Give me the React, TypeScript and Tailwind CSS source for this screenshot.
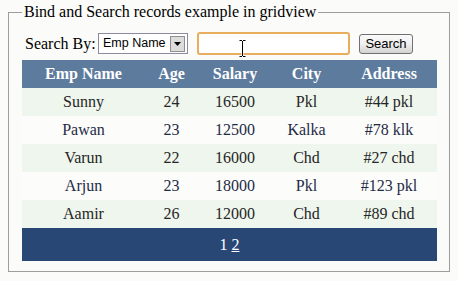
import React from 'react';

interface Emp {
  name: string;
  age: number;
  salary: number;
  city: string;
  address: string;
}

const rows: Emp[] = [
  { name: 'Sunny', age: 24, salary: 16500, city: 'Pkl', address: '#44 pkl' },
  { name: 'Pawan', age: 23, salary: 12500, city: 'Kalka', address: '#78 klk' },
  { name: 'Varun', age: 22, salary: 16000, city: 'Chd', address: '#27 chd' },
  { name: 'Arjun', age: 23, salary: 18000, city: 'Pkl', address: '#123 pkl' },
  { name: 'Aamir', age: 26, salary: 12000, city: 'Chd', address: '#89 chd' },
];

const serif = "font-['Liberation_Serif','Times_New_Roman',serif]";
const sans = "font-['Liberation_Sans',Arial,sans-serif]";

export default function App() {
  return (
    <div className={`min-h-[281px] w-[458px] bg-[#fbfbf9] ${serif} text-[16px] text-black`}>
      <fieldset className="ml-[8px] w-[442px] border border-[#9d9d9d] pl-[13px] pr-[12px] pt-[7px] pb-[10px]">
        <legend className="px-[2px] leading-[24px]">Bind and Search records example in gridview</legend>

        <div className="flex h-[25px] items-center">
          <span className="w-[76px] pl-[3px]">Search By:</span>

          <div className={`flex h-[21px] w-[90px] items-center justify-between border border-[#8a8aa0] bg-white pl-[4px] pr-[2px] ${sans} text-[12.5px]`}>
            <span>Emp Name</span>
            <div className="flex h-[16px] w-[15px] items-center justify-center border border-[#8f8f8f] bg-[#dcdcdc]">
              <svg width="7" height="4" viewBox="0 0 7 4">
                <path d="M0 0h7L3.5 4z" fill="#000" />
              </svg>
            </div>
          </div>

          <div className="relative ml-[9px] h-[23px] w-[153px] rounded-[3px] border-2 border-[#e9ad5e] bg-white">
            <svg className="absolute left-[40px] top-[6px]" width="7" height="17" viewBox="0 0 7 17">
              <path d="M0.5 0.5h2.5M4 0.5h2.5M3.5 1v15M0.5 16.5h2.5M4 16.5h2.5" stroke="#fff" strokeWidth="2.2" fill="none" />
              <path d="M0.5 0.5h2.5M4 0.5h2.5M3.5 1v15M0.5 16.5h2.5M4 16.5h2.5" stroke="#000" strokeWidth="1" fill="none" />
            </svg>
          </div>

          <button className={`ml-[9px] h-[20px] w-[54px] rounded-[3px] border border-[#707070] bg-linear-to-b from-[#fafafa] via-[#efefef] to-[#d3d3d3] ${sans} text-[13px] leading-[16px]`}>
            Search
          </button>
        </div>

        <table className="mt-[4px] w-[415px] table-fixed border-collapse text-center">
          <colgroup>
            <col className="w-[123px]" />
            <col className="w-[53px]" />
            <col className="w-[74px]" />
            <col className="w-[69px]" />
            <col className="w-[96px]" />
          </colgroup>
          <thead>
            <tr className="h-[28px] bg-[#5d7b9d] font-bold text-white">
              <th>Emp Name</th>
              <th>Age</th>
              <th>Salary</th>
              <th>City</th>
              <th>Address</th>
            </tr>
          </thead>
          <tbody>
            {rows.map((r, i) => (
              <tr
                key={r.name}
                className={`h-[28px] ${i % 2 === 0 ? 'bg-[#eff6ed] text-[#262626]' : 'bg-[#fcfcfb] text-[#1e2b45]'}`}
              >
                <td>{r.name}</td>
                <td>{r.age}</td>
                <td>{r.salary}</td>
                <td>{r.city}</td>
                <td>{r.address}</td>
              </tr>
            ))}
            <tr className="h-[33px] bg-[#284775] text-white">
              <td colSpan={5}>
                <span>1</span> <a className="underline">2</a>
              </td>
            </tr>
          </tbody>
        </table>
      </fieldset>
    </div>
  );
}
